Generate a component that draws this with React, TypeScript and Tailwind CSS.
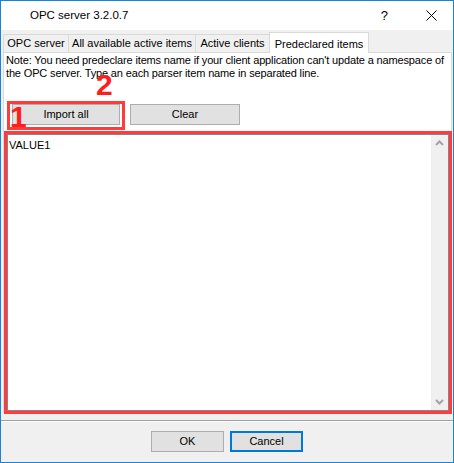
import React from 'react';

const TABS = [
  { label: 'OPC server', w: 'w-[66px]' },
  { label: 'All available active items', w: 'w-[128px]' },
  { label: 'Active clients', w: 'w-[75px]' },
];

function WinButton({ label, className }: { label: string; className: string }) {
  return (
    <div
      className={`flex items-center justify-center h-[21px] bg-[#e1e1e1] border border-[#adadad] text-[11px] text-black ${className}`}
    >
      {label}
    </div>
  );
}

export default function App() {
  return (
    <div
      className="w-[454px] h-[463px] flex flex-col border border-[#1883d7] bg-[#f0f0f0] overflow-hidden"
      style={{ fontFamily: '"Liberation Sans", Arial, sans-serif' }}
    >
      {/* Title bar */}
      <div className="h-[29px] bg-white flex items-center shrink-0">
        <span className="ml-[29px] text-[11.5px] text-black">OPC server 3.2.0.7</span>
        <span className="ml-auto text-[13px] text-black mr-[38px]">?</span>
        <svg className="mr-[16px]" width="11" height="11" viewBox="0 0 11 11">
          <path d="M0.5 0.5L10.5 10.5M10.5 0.5L0.5 10.5" stroke="#000" strokeWidth="1" />
        </svg>
      </div>

      {/* Tabs */}
      <div className="flex items-end h-[21px] ml-[2px] mt-[1px] shrink-0 relative z-10">
        {TABS.map((t) => (
          <div
            key={t.label}
            className={`${t.w} h-[18px] flex items-center justify-center bg-[#f0f0f0] border border-b-0 border-[#d9d9d9] -mr-px text-[11px] text-black`}
          >
            {t.label}
          </div>
        ))}
        <div className="w-[100px] h-[21px] -mb-px flex items-start justify-center pt-[3px] bg-white border border-b-0 border-[#d9d9d9] text-[11px] text-black">
          Predeclared items
        </div>
      </div>

      {/* Tab page */}
      <div className="relative ml-[2px] mr-px h-[361px] bg-white border border-[#d9d9d9] flex flex-col shrink-0">
        <div className="pl-[2px] pt-[1px] text-[11px] leading-[13px] text-black whitespace-nowrap tracking-[-0.15px]">
          Note: You need predeclare items name if your client application can't update a namespace of
          <br />
          the OPC server. Type an each parser item name in separated line.
        </div>

        <div className="flex gap-[10px] ml-[8px] mt-[24px]">
          <WinButton label="Import all" className="w-[108px]" />
          <WinButton label="Clear" className="w-[110px]" />
        </div>

        <div className="ml-[3px] mr-[2px] mt-[9px] h-[277px] border border-[#828790] flex">
          <div className="flex-1 pl-[1px] pt-[2px] text-[11px] text-black">VALUE1</div>
          <div className="w-[17px] bg-[#f0f0f0] flex flex-col justify-between items-center py-[5px]">
            <svg width="9" height="6" viewBox="0 0 9 6">
              <path d="M1 5L4.5 1.5L8 5" stroke="#a3a3a3" strokeWidth="2" fill="none" />
            </svg>
            <svg width="9" height="6" viewBox="0 0 9 6">
              <path d="M1 1L4.5 4.5L8 1" stroke="#a3a3a3" strokeWidth="2" fill="none" />
            </svg>
          </div>
        </div>

        {/* annotations */}
        <div className="absolute left-[3px] top-[48px] w-[118px] h-[29px] border-[3px] border-[#ff3c3c]" />
        <div className="absolute left-[0px] top-[78px] w-[448px] h-[283px] border-[3px] border-[#ff3c3c]" />
        <span className="absolute left-[6px] top-[49px] text-[30px] leading-[30px] font-bold text-[#ff1e1e]">1</span>
        <span className="absolute left-[92px] top-[17px] text-[30px] leading-[30px] font-bold text-[#ff1e1e]">2</span>
      </div>

      {/* Footer */}
      <div className="mt-[7px] h-px bg-[#a0a0a0] shrink-0" />
      <div className="h-px bg-white shrink-0" />
      <div className="flex justify-center gap-[6px] mt-[9px]">
        <WinButton label="OK" className="w-[73px]" />
        <div className="w-[73px] h-[21px] flex items-center justify-center bg-[#e1e1e1] border-2 border-[#0078d7] text-[11px] text-black">
          Cancel
        </div>
      </div>
    </div>
  );
}
